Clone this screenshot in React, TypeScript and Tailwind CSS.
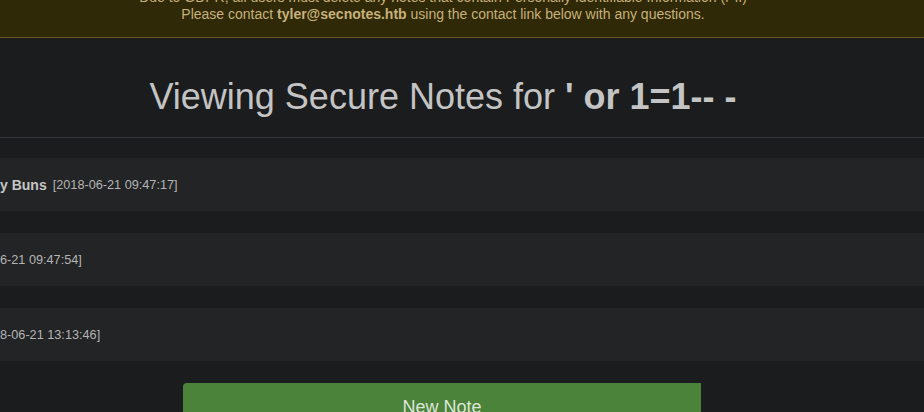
import React from "react";

const notes = [
  { title: "y Buns", stamp: "[2018-06-21 09:47:17]" },
  { title: "", stamp: "6-21 09:47:54]" },
  { title: "", stamp: "8-06-21 13:13:46]" },
];

const App = () => {
  return (
    <div
      className="h-[412px] w-[924px] overflow-hidden bg-[#1b1c1e]"
      style={{ fontFamily: '"Liberation Sans", Arial, sans-serif' }}
    >
      <div className="flex h-[38px] flex-col justify-end overflow-hidden border-b border-[#6a5820] bg-[#2f2908] pb-[14px] text-center text-[14px] leading-[17px] text-[#c8b07a]">
        <div className="pr-[38px]">
          Due to GDPR, all users must delete any notes that contain Personally Identifiable Information (PII)
        </div>
        <div className="pr-[38px]">
          Please contact <b>tyler@secnotes.htb</b> using the contact link below with any questions.
        </div>
      </div>

      <h1 className="pr-[38px] pt-[37px] pb-[19px] text-center text-[36px] leading-[43px] text-[#c4c4c4]">
        Viewing Secure Notes for <b>' or 1=1-- -</b>
      </h1>

      <hr className="border-t border-[#333437]" />

      <div className="mt-[20px] flex flex-col gap-[22px]">
        {notes.map((n, i) => (
          <div key={i} className="flex h-[53px] items-center bg-[#232426] pt-[2px] text-[#b4b4b4]">
            {n.title && <b className="mr-[6px] text-[14px] text-[#c6c6c6]">{n.title}</b>}
            <span className="text-[12.7px]">{n.stamp}</span>
          </div>
        ))}
      </div>

      <div className="flex justify-center pr-[40px] pt-[22px]">
        <button className="h-[46px] w-[518px] rounded-tl-[4px] bg-[#4b833a] pt-[2px] text-[18px] text-[#dde6d8]">
          New Note
        </button>
      </div>
    </div>
  );
};

export default App;
